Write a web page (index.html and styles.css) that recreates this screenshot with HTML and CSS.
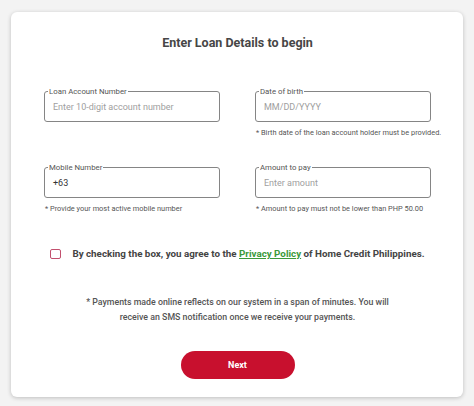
FILE: index.html
```html
<!DOCTYPE html>
<html lang="en">
<head>
<meta charset="utf-8">
<title>Enter Loan Details</title>
<link rel="stylesheet" href="styles.css">
</head>
<body>
<main class="card">
  <h1 class="title">Enter Loan Details to begin</h1>
  <div class="grid">
    <div class="cell">
      <div class="field">
        <span class="field-label">Loan Account Number</span>
        <span class="placeholder">Enter 10-digit account number</span>
      </div>
    </div>
    <div class="cell">
      <div class="field">
        <span class="field-label">Date of birth</span>
        <span class="placeholder">MM/DD/YYYY</span>
      </div>
      <p class="helper">* Birth date of the loan account holder must be provided.</p>
    </div>
    <div class="cell">
      <div class="field">
        <span class="field-label">Mobile Number</span>
        <span class="value">+63</span>
      </div>
      <p class="helper">* Provide your most active mobile number</p>
    </div>
    <div class="cell">
      <div class="field">
        <span class="field-label">Amount to pay</span>
        <span class="placeholder">Enter amount</span>
      </div>
      <p class="helper">* Amount to pay must not be lower than PHP 50.00</p>
    </div>
  </div>
  <label class="agree">
    <span class="checkbox"></span>
    <span class="agree-text">By checking the box, you agree to the <a class="link" href="#">Privacy Policy</a> of Home Credit Philippines.</span>
  </label>
  <p class="note">* Payments made online reflects on our system in a span of minutes. You will<br>receive an SMS notification once we receive your payments.</p>
  <div class="actions">
    <button class="next" type="button">Next</button>
  </div>
</main>
</body>
</html>
```

FILE: styles.css
```css
* { box-sizing: border-box; }
html, body { margin: 0; }
body {
  background: #f3f3f3;
  padding: 12px 11px 9px 11px;
  font-family: Roboto, "Liberation Sans", Arial, sans-serif;
  color: #444;
}
.card {
  background: #fff;
  border-radius: 6px;
  box-shadow: 0 1px 4px rgba(0,0,0,0.22);
  height: 385px;
  padding: 23px 32px 17px 33px;
}
.title {
  margin: 0;
  text-align: center;
  font-size: 12.5px;
  line-height: 16px;
  font-weight: 700;
  color: #464646;
}
.grid {
  margin-top: 40px;
  display: grid;
  grid-template-columns: 176px 176px;
  column-gap: 35px;
  row-gap: 30px;
}
.field {
  position: relative;
  height: 31px;
  border: 1px solid #858585;
  border-radius: 3px;
  display: flex;
  align-items: center;
  padding: 0 8px;
  font-size: 9px;
}
.field-label {
  position: absolute;
  top: -5px;
  left: 3px;
  background: #fff;
  padding: 0 1px;
  font-size: 7.8px;
  line-height: 9px;
  color: #555;
}
.placeholder { color: #a0a0a0; }
.value { color: #333; }
.helper {
  margin: 6px 0 0 1px;
  font-size: 7.4px;
  line-height: 9px;
  color: #555;
  white-space: nowrap;
}
.agree {
  margin-top: 35px;
  display: flex;
  align-items: center;
  justify-content: center;
  gap: 11px;
}
.checkbox {
  width: 11px;
  height: 10px;
  border: 1.5px solid #c2506e;
  border-radius: 2px;
  flex: none;
}
.agree-text {
  font-size: 9.8px;
  line-height: 12px;
  font-weight: 700;
  color: #444;
}
.link {
  color: #3b9a3b;
  text-decoration: underline;
}
.note {
  margin: 35px 0 0;
  text-align: center;
  font-size: 8.8px;
  line-height: 15px;
  font-weight: 500;
  color: #555;
}
.actions {
  margin-top: 26px;
  display: flex;
  justify-content: center;
}
.next {
  width: 114px;
  height: 28px;
  border: none;
  border-radius: 14px;
  background: #c8102e;
  color: #fff;
  font-family: inherit;
  font-size: 9px;
  font-weight: 700;
}
```
